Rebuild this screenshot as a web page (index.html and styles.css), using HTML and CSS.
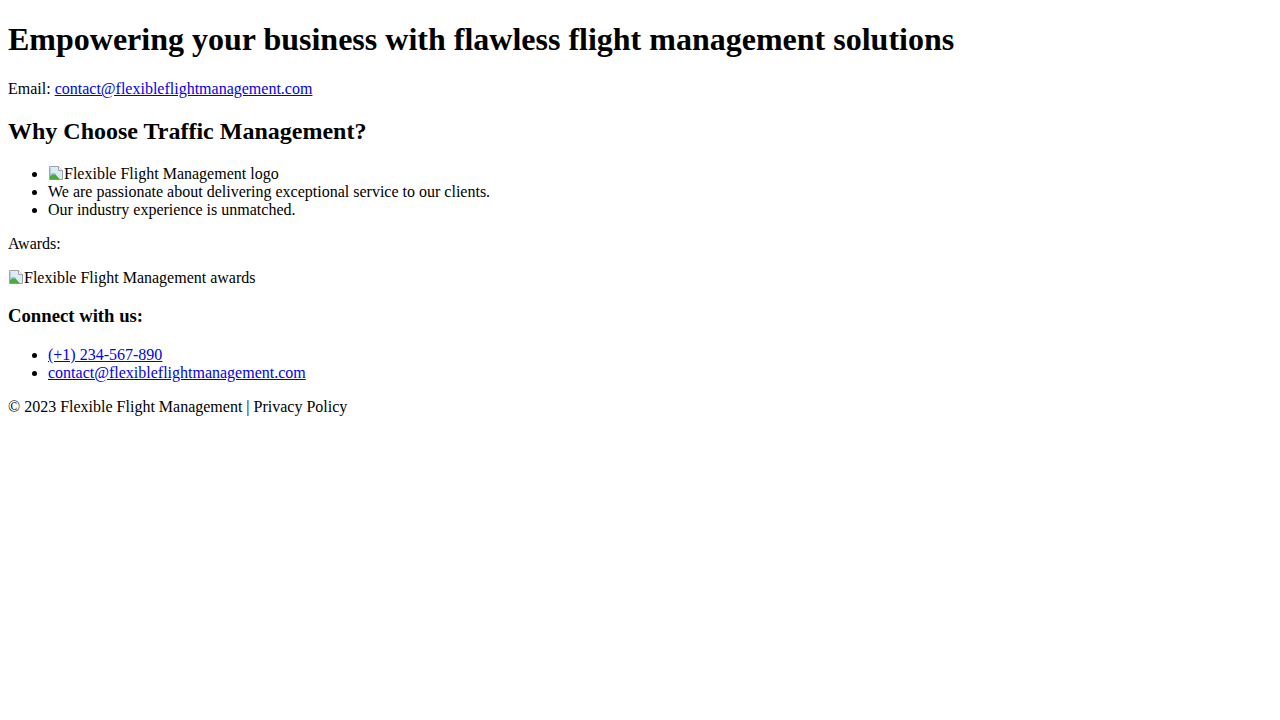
FILE: index.html
```html
<!DOCTYPE html>
<html lang="en">
<head>
<meta charset="utf-8">
<title>Flexible Flight Management</title>
<link rel="stylesheet" href="styles.css">
</head>
<body>
<header>
  <h1>Empowering your business with flawless flight management solutions</h1>
  <p>Email: <a href="#">contact@flexibleflightmanagement.com</a></p>
</header>
<main>
  <section>
    <h2>Why Choose Traffic Management?</h2>
    <ul>
      <li><span class="broken"><svg class="broken-icon" width="16" height="16" viewBox="0 0 16 16" aria-hidden="true"><path d="M1.5 1.5h9l4 4v9h-13z" fill="#dfeaf5" stroke="#9aa4ad"/><path d="M10.5 1.5v4h4" fill="#f4f6f8" stroke="#9aa4ad"/><path d="M2 14.5v-3.5c2-2 4-2.5 6-1l4 4.5z" fill="#4caa3c"/><path d="M2 3v7c2-1.5 4-2 6-0.5" fill="none" stroke="#7fb0e0" stroke-width="1"/></svg>Flexible Flight Management logo</span></li>
      <li>We are passionate about delivering exceptional service to our clients.</li>
      <li>Our industry experience is unmatched.</li>
    </ul>
    <p>Awards:</p>
    <p><span class="broken"><svg class="broken-icon" width="16" height="16" viewBox="0 0 16 16" aria-hidden="true"><path d="M1.5 1.5h9l4 4v9h-13z" fill="#dfeaf5" stroke="#9aa4ad"/><path d="M10.5 1.5v4h4" fill="#f4f6f8" stroke="#9aa4ad"/><path d="M2 14.5v-3.5c2-2 4-2.5 6-1l4 4.5z" fill="#4caa3c"/><path d="M2 3v7c2-1.5 4-2 6-0.5" fill="none" stroke="#7fb0e0" stroke-width="1"/></svg>Flexible Flight Management awards</span></p>
  </section>
  <section>
    <h3>Connect with us:</h3>
    <ul>
      <li><a href="#">(+1) 234-567-890</a></li>
      <li><a href="#">contact@flexibleflightmanagement.com</a></li>
    </ul>
  </section>
</main>
<footer>
  <p>© 2023 Flexible Flight Management | Privacy Policy</p>
</footer>
</body>
</html>
```

FILE: styles.css
```css
body {
  margin: 0 8px 8px;
  font-family: "Liberation Serif", "Times New Roman", serif;
  font-size: 16px;
  color: #000;
  background: #fff;
}

a {
  color: #0000ee;
}

.broken {
  white-space: nowrap;
}

.broken-icon {
  vertical-align: -2px;
}
```
